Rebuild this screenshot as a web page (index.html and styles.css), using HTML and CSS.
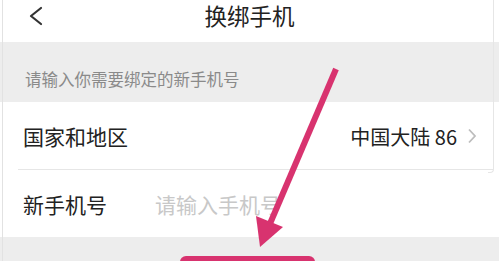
FILE: index.html
```html
<!DOCTYPE html>
<html lang="zh">
<head>
<meta charset="utf-8">
<link rel="stylesheet" href="styles.css">
</head>
<body>
<div class="page">
  <header class="topbar">
    <svg class="back" width="16" height="20" viewBox="0 0 16 20"><path d="M13 2 L3 10 L13 18" fill="none" stroke="#333" stroke-width="2.2" stroke-linecap="round" stroke-linejoin="round"/></svg>
    <h1 class="title">换绑手机</h1>
  </header>
  <div class="hint">请输入你需要绑定的新手机号</div>
  <div class="row row-country">
    <span class="label">国家和地区</span>
    <span class="value">中国大陆 86</span>
    <svg class="chev" width="10" height="16" viewBox="0 0 10 16"><path d="M2 1.5 L8 8 L2 14.5" fill="none" stroke="#bdbdbd" stroke-width="1.8"/></svg>
  </div>
  <div class="row row-phone">
    <span class="label">新手机号</span>
    <span class="placeholder">请输入手机号</span>
  </div>
  <div class="footer">
    <div class="btn"></div>
  </div>
  <div class="edge-left"></div>
  <div class="edge-right"></div>
  <svg class="arrow" width="499" height="261" viewBox="0 0 499 261">
    <line x1="336" y1="69" x2="269" y2="226" stroke="#d8336f" stroke-width="6"/>
    <polygon points="260,247 256,216 283,227" fill="#d8336f"/>
  </svg>
</div>
</body>
</html>
```
FILE: styles.css
```css
html, body {
  margin: 0;
  padding: 0;
  background: #fff;
}
body {
  font-family: "Noto Sans CJK SC", "Noto Sans", sans-serif;
  width: 499px;
  height: 261px;
  overflow: hidden;
}
.page {
  position: relative;
  width: 499px;
  height: 261px;
  overflow: hidden;
}
.topbar {
  height: 42px;
  box-sizing: border-box;
  padding-top: 1px;
  display: flex;
  align-items: flex-start;
  justify-content: center;
  position: relative;
  background: #fff;
}
.back {
  position: absolute;
  left: 28px;
  top: 6px;
}
.title {
  margin: 0;
  font-size: 22.5px;
  font-weight: 400;
  color: #222;
  line-height: 28px;
}
.hint {
  height: 60px;
  background: #ededed;
  box-sizing: border-box;
  padding: 24px 0 0 25px;
  font-size: 16.5px;
  line-height: 26px;
  color: #8a8a8a;
}
.row {
  display: flex;
  align-items: center;
  background: #fff;
  padding-left: 23px;
  font-size: 21px;
  color: #222;
}
.row-country {
  height: 68px;
  padding-right: 22px;
  position: relative;
}
.row-country::after {
  content: "";
  position: absolute;
  left: 18px;
  right: 6px;
  bottom: 0;
  border-bottom: 1px solid #e6e6e6;
}
.row-country .label {
  flex: 1;
}
.value {
  color: #222;
  font-size: 20px;
  margin-right: 10px;
}
.chev {
  display: block;
}
.row-phone {
  height: 67px;
}
.row-phone .label {
  width: 132px;
}
.placeholder {
  color: #c8c8c8;
}
.footer {
  background: #ededed;
  height: 24px;
  padding: 19px 0 0 180px;
}
.btn {
  width: 135px;
  height: 20px;
  background: #d8336f;
  border-radius: 6px 6px 0 0;
}
.edge-left {
  position: absolute;
  left: 2px;
  top: 0;
  bottom: 0;
  width: 1px;
  background: #e2e2e2;
}
.edge-right {
  position: absolute;
  left: 488px;
  top: 0;
  width: 5px;
  height: 172px;
  border-right: 1px solid #e6e6e6;
  border-bottom: 1px solid #e6e6e6;
  border-bottom-right-radius: 4px;
}
.arrow {
  position: absolute;
  left: 0;
  top: 0;
}
```
